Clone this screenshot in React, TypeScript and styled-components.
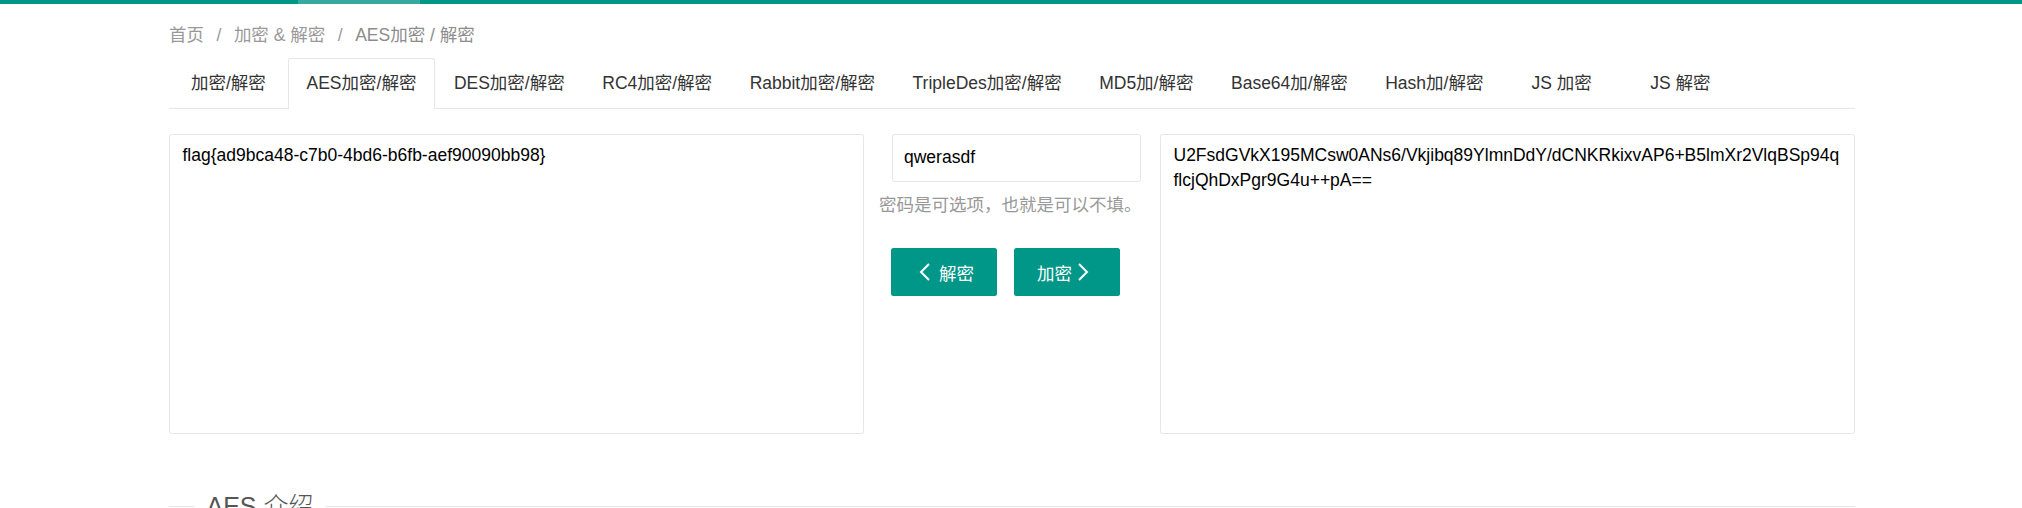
import React from "react";
import styled, { createGlobalStyle } from "styled-components";

const GlobalStyle = createGlobalStyle`
  html, body {
    margin: 0;
    padding: 0;
    background: #fff;
  }
  body {
    font-family: "Liberation Sans", "Noto Sans CJK SC", sans-serif;
    font-size: 17.5px;
    color: #333;
  }
  * {
    box-sizing: border-box;
  }
`;

const TopBar = styled.div`
  height: 4px;
  background: #009688;
  display: flex;
`;

const TopBarHighlight = styled.div`
  margin-left: 298px;
  width: 122px;
  height: 100%;
  background: #36aa9e;
`;

const Page = styled.div`
  width: 1686px;
  margin: 0 0 0 169px;
`;

const Breadcrumb = styled.div`
  margin-top: 18.5px;
  height: 25px;
  line-height: 25px;
  display: flex;
  align-items: center;
  white-space: nowrap;
`;

const Crumb = styled.a<{ $current?: boolean }>`
  color: ${(p) => (p.$current ? "#8c8c8c" : "#999")};
  text-decoration: none;
  white-space: pre;
`;

const Separator = styled.span`
  margin: 0 12.5px;
  color: #999;
`;

const TabBar = styled.ul`
  list-style: none;
  margin: 10.5px 0 0;
  padding: 0;
  display: flex;
  align-items: flex-start;
  height: 51px;
  border-bottom: 1px solid #e6e6e6;
`;

const Tab = styled.li<{ $active?: boolean }>`
  box-sizing: content-box;
  min-width: 81.25px;
  height: 49px;
  line-height: 49px;
  padding: 0 17.75px 1px;
  margin-bottom: -1px;
  border: 1px solid ${(p) => (p.$active ? "#e6e6e6" : "transparent")};
  border-bottom: 0;
  border-radius: 2.5px 2.5px 0 0;
  background: ${(p) => (p.$active ? "#fff" : "transparent")};
  text-align: center;
  white-space: pre;
  color: #333;
  cursor: pointer;
`;

const Workspace = styled.div`
  margin-top: 25px;
  display: grid;
  grid-template-columns: 695px 266px 695px;
  column-gap: 15px;
`;

const TextBox = styled.textarea<{ $breakAll?: boolean }>`
  display: block;
  width: 100%;
  height: 300px;
  margin: 0;
  padding: 7.5px 12.5px;
  border: 1px solid #e6e6e6;
  border-radius: 2.5px;
  font-family: "Liberation Sans", "Noto Sans CJK SC", sans-serif;
  font-size: 17.5px;
  line-height: 25px;
  color: #000;
  background: #fff;
  resize: none;
  overflow: hidden;
  outline: none;
  word-break: ${(p) => (p.$breakAll ? "break-all" : "normal")};
`;

const Middle = styled.div`
  display: flex;
  flex-direction: column;
`;

const KeyInput = styled.input`
  display: block;
  width: 249px;
  height: 47.5px;
  margin: 0 0 0 13px;
  padding: 0 11px;
  border: 1px solid #e6e6e6;
  border-radius: 2.5px;
  font-family: "Liberation Sans", "Noto Sans CJK SC", sans-serif;
  font-size: 17.5px;
  color: #000;
  outline: none;
`;

const Hint = styled.div`
  margin-top: 11px;
  height: 25px;
  line-height: 25px;
  color: #999;
  white-space: nowrap;
`;

const ButtonRow = styled.div`
  margin-top: 30.5px;
  padding-left: 12px;
  display: flex;
  gap: 17px;
`;

const ActionButton = styled.button<{ $iconFirst?: boolean }>`
  display: flex;
  align-items: center;
  width: 106px;
  height: 48px;
  padding: ${(p) => (p.$iconFirst ? "0 0 0 28px" : "0 0 0 23px")};
  gap: ${(p) => (p.$iconFirst ? "9px" : "6px")};
  border: 0;
  border-radius: 2.5px;
  background: #009688;
  color: #fff;
  font-family: "Liberation Sans", "Noto Sans CJK SC", sans-serif;
  font-size: 17.5px;
  cursor: pointer;
`;

const Section = styled.div`
  margin-top: 57px;
  display: flex;
  align-items: center;
  height: 30px;

  &::before {
    content: "";
    width: 25px;
    border-top: 1px solid #e6e6e6;
  }
  &::after {
    content: "";
    flex: 1;
    border-top: 1px solid #e6e6e6;
  }
`;

const Legend = styled.span`
  padding: 0 12.5px;
  font-size: 25px;
  font-weight: 300;
  line-height: 30px;
  color: #555;
  white-space: pre;
`;

function Chevron({ dir }: { dir: "left" | "right" }) {
  const pts = dir === "left" ? "10,1 2,9 10,17" : "1,1 9,9 1,17";
  return (
    <svg width="11" height="18" viewBox="0 0 11 18" fill="none">
      <polyline points={pts} stroke="#fff" strokeWidth="2" strokeLinejoin="miter" />
    </svg>
  );
}

const tabs = [
  "加密/解密",
  "AES加密/解密",
  "DES加密/解密",
  "RC4加密/解密",
  "Rabbit加密/解密",
  "TripleDes加密/解密",
  "MD5加/解密",
  "Base64加/解密",
  "Hash加/解密",
  "JS 加密",
  "JS 解密",
];

const plain = "flag{ad9bca48-c7b0-4bd6-b6fb-aef90090bb98}";
const cipher =
  "U2FsdGVkX195MCsw0ANs6/Vkjibq89YlmnDdY/dCNKRkixvAP6+B5lmXr2VlqBSp94qflcjQhDxPgr9G4u++pA==";

export default function App() {
  return (
    <>
      <GlobalStyle />
      <TopBar>
        <TopBarHighlight />
      </TopBar>
      <Page>
        <Breadcrumb>
          <Crumb href="#">首页</Crumb>
          <Separator>/</Separator>
          <Crumb href="#">加密 &amp; 解密</Crumb>
          <Separator>/</Separator>
          <Crumb $current>AES加密 / 解密</Crumb>
        </Breadcrumb>

        <TabBar>
          {tabs.map((t) => (
            <Tab key={t} $active={t === "AES加密/解密"}>
              {t}
            </Tab>
          ))}
        </TabBar>

        <Workspace>
          <TextBox defaultValue={plain} spellCheck={false} />
          <Middle>
            <KeyInput defaultValue="qwerasdf" spellCheck={false} />
            <Hint>密码是可选项，也就是可以不填。</Hint>
            <ButtonRow>
              <ActionButton $iconFirst>
                <Chevron dir="left" />
                <span>解密</span>
              </ActionButton>
              <ActionButton>
                <span>加密</span>
                <Chevron dir="right" />
              </ActionButton>
            </ButtonRow>
          </Middle>
          <TextBox $breakAll defaultValue={cipher} spellCheck={false} />
        </Workspace>

        <Section>
          <Legend>AES 介绍</Legend>
        </Section>
      </Page>
    </>
  );
}
